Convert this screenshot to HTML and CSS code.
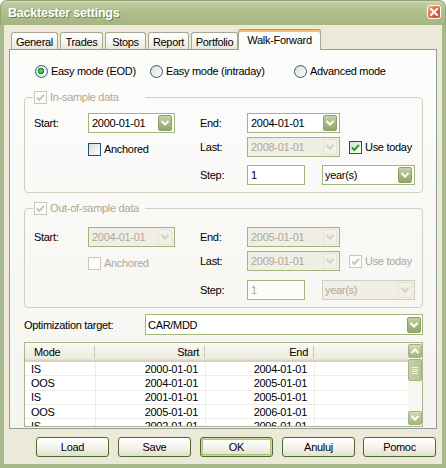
FILE: index.html
```html
<!DOCTYPE html>
<html lang="en">
<head>
<meta charset="utf-8">
<title>Backtester settings</title>
<link rel="stylesheet" href="styles.css">
</head>
<body>
<div class="window">
  <div class="titlebar">
    <span class="title">Backtester settings</span>
    <span class="close-btn"><svg width="12" height="12" viewBox="0 0 12 12"><path d="M3 3 L9 9 M9 3 L3 9" stroke="#fff" stroke-width="2" stroke-linecap="square"/></svg></span>
  </div>
  <div class="client">
    <div class="tabs">
      <div class="tab t-general">General</div>
      <div class="tab t-trades">Trades</div>
      <div class="tab t-stops">Stops</div>
      <div class="tab t-report">Report</div>
      <div class="tab t-portfolio">Portfolio</div>
      <div class="tab tab-active">Walk-Forward</div>
    </div>
    <div class="panel">
      <div class="modes">
        <div class="radio-item ri-1"><span class="radio checked"></span><span>Easy mode (EOD)</span></div>
        <div class="radio-item ri-2"><span class="radio"></span><span>Easy mode (intraday)</span></div>
        <div class="radio-item"><span class="radio"></span><span>Advanced mode</span></div>
      </div>

      <fieldset class="group group-is">
        <legend class="legend"><span class="check disabled"><svg width="11" height="11" viewBox="0 0 11 11"><path d="M2 5.5 L4.3 8 L9 2.8" fill="none" stroke="#c9c7ba" stroke-width="2"/></svg></span><span>In-sample data</span></legend>
        <div class="grow">
          <span class="flabel">Start:</span>
          <div class="combo w-start"><span>2000-01-01</span><span class="combo-btn"><svg width="12" height="14" viewBox="0 0 12 14"><path d="M2.5 5 L6 8.5 L9.5 5" fill="none" stroke="#fff" stroke-width="2"/></svg></span></div>
          <span class="flabel flabel-2">End:</span>
          <div class="combo w-end"><span>2004-01-01</span><span class="combo-btn"><svg width="12" height="14" viewBox="0 0 12 14"><path d="M2.5 5 L6 8.5 L9.5 5" fill="none" stroke="#fff" stroke-width="2"/></svg></span></div>
        </div>
        <div class="grow grow-2">
          <span class="flabel"></span>
          <div class="check-item w-start anchored"><span class="check"></span><span>Anchored</span></div>
          <span class="flabel flabel-2">Last:</span>
          <div class="combo combo-dis w-end"><span>2008-01-01</span><span class="combo-btn btn-dis"><svg width="12" height="14" viewBox="0 0 12 14"><path d="M2.5 5 L6 8.5 L9.5 5" fill="none" stroke="#d3d1c4" stroke-width="2"/></svg></span></div>
          <div class="check-item usetoday"><span class="check"><svg width="11" height="11" viewBox="0 0 11 11"><path d="M2 5.5 L4.3 8 L9 2.8" fill="none" stroke="#21a121" stroke-width="2"/></svg></span><span>Use today</span></div>
        </div>
        <div class="grow grow-3">
          <span class="flabel"></span>
          <span class="w-start"></span>
          <span class="flabel flabel-2">Step:</span>
          <div class="tinput">1</div>
          <div class="combo combo-year"><span>year(s)</span><span class="combo-btn"><svg width="12" height="14" viewBox="0 0 12 14"><path d="M2.5 5 L6 8.5 L9.5 5" fill="none" stroke="#fff" stroke-width="2"/></svg></span></div>
        </div>
      </fieldset>

      <fieldset class="group group-oos">
        <legend class="legend"><span class="check disabled"><svg width="11" height="11" viewBox="0 0 11 11"><path d="M2 5.5 L4.3 8 L9 2.8" fill="none" stroke="#c9c7ba" stroke-width="2"/></svg></span><span>Out-of-sample data</span></legend>
        <div class="grow dis">
          <span class="flabel en">Start:</span>
          <div class="combo combo-dis w-start"><span>2004-01-01</span><span class="combo-btn btn-dis"><svg width="12" height="14" viewBox="0 0 12 14"><path d="M2.5 5 L6 8.5 L9.5 5" fill="none" stroke="#d3d1c4" stroke-width="2"/></svg></span></div>
          <span class="flabel flabel-2 en">End:</span>
          <div class="combo combo-dis w-end"><span>2005-01-01</span><span class="combo-btn btn-dis"><svg width="12" height="14" viewBox="0 0 12 14"><path d="M2.5 5 L6 8.5 L9.5 5" fill="none" stroke="#d3d1c4" stroke-width="2"/></svg></span></div>
        </div>
        <div class="grow grow-2 dis">
          <span class="flabel"></span>
          <div class="check-item w-start anchored"><span class="check disabled"></span><span>Anchored</span></div>
          <span class="flabel flabel-2 en">Last:</span>
          <div class="combo combo-dis w-end"><span>2009-01-01</span><span class="combo-btn btn-dis"><svg width="12" height="14" viewBox="0 0 12 14"><path d="M2.5 5 L6 8.5 L9.5 5" fill="none" stroke="#d3d1c4" stroke-width="2"/></svg></span></div>
          <div class="check-item usetoday"><span class="check disabled"><svg width="11" height="11" viewBox="0 0 11 11"><path d="M2 5.5 L4.3 8 L9 2.8" fill="none" stroke="#c9c7ba" stroke-width="2"/></svg></span><span>Use today</span></div>
        </div>
        <div class="grow grow-3b dis">
          <span class="flabel"></span>
          <span class="w-start"></span>
          <span class="flabel flabel-2 en">Step:</span>
          <div class="tinput tinput-dis">1</div>
          <div class="combo combo-year combo-dis2"><span>year(s)</span><span class="combo-btn btn-dis"><svg width="12" height="14" viewBox="0 0 12 14"><path d="M2.5 5 L6 8.5 L9.5 5" fill="none" stroke="#d3d1c4" stroke-width="2"/></svg></span></div>
        </div>
      </fieldset>

      <div class="opt-row">
        <span class="opt-label">Optimization target:</span>
        <div class="combo combo-opt"><span>CAR/MDD</span><span class="combo-btn"><svg width="12" height="14" viewBox="0 0 12 14"><path d="M2.5 5 L6 8.5 L9.5 5" fill="none" stroke="#fff" stroke-width="2"/></svg></span></div>
      </div>

      <div class="listview">
        <div class="lv-main">
          <div class="lv-head">
            <div class="hc hc-mode">Mode</div>
            <div class="hc hc-num">Start</div>
            <div class="hc hc-num">End</div>
            <div class="hc hc-rest"></div>
          </div>
          <div class="lv-row"><div class="c">IS</div><div class="c num">2000-01-01</div><div class="c num">2004-01-01</div><div class="c rest"></div></div>
          <div class="lv-row"><div class="c">OOS</div><div class="c num">2004-01-01</div><div class="c num">2005-01-01</div><div class="c rest"></div></div>
          <div class="lv-row"><div class="c">IS</div><div class="c num">2001-01-01</div><div class="c num">2005-01-01</div><div class="c rest"></div></div>
          <div class="lv-row"><div class="c">OOS</div><div class="c num">2005-01-01</div><div class="c num">2006-01-01</div><div class="c rest"></div></div>
          <div class="lv-row"><div class="c">IS</div><div class="c num">2002-01-01</div><div class="c num">2006-01-01</div><div class="c rest"></div></div>
        </div>
        <div class="lv-scroll">
          <div class="sb-btn"><svg width="10" height="8" viewBox="0 0 10 8"><path d="M1.5 6 L5 2.5 L8.5 6" fill="none" stroke="#fff" stroke-width="2"/></svg></div>
          <div class="sb-thumb"><span></span><span></span><span></span><span></span></div>
          <div class="sb-track"></div>
          <div class="sb-btn"><svg width="10" height="8" viewBox="0 0 10 8"><path d="M1.5 2 L5 5.5 L8.5 2" fill="none" stroke="#fff" stroke-width="2"/></svg></div>
        </div>
      </div>
    </div>

    <div class="buttons">
      <div class="btn">Load</div>
      <div class="btn">Save</div>
      <div class="btn btn-default">OK</div>
      <div class="btn">Anuluj</div>
      <div class="btn btn-last">Pomoc</div>
    </div>
  </div>
</div>
</body>
</html>
```

FILE: styles.css
```css
* { box-sizing: border-box; }
html, body { margin: 0; padding: 0; }
body {
  width: 446px;
  height: 468px;
  overflow: hidden;
  background: #fff;
  font-family: "Liberation Sans", Arial, sans-serif;
  font-size: 11px;
  letter-spacing: -0.3px;
  color: #000;
}
.window {
  width: 446px;
  height: 468px;
  display: flex;
  flex-direction: column;
}
.titlebar {
  flex: none;
  height: 25px;
  display: flex;
  align-items: center;
  justify-content: space-between;
  padding: 0 4px 1px 7px;
  border-radius: 7px 7px 0 0;
  background: linear-gradient(#d3ddb8 0%, #bccaa0 12%, #b0bf8c 45%, #a9b986 80%, #a6b683 100%);
  border: 1px solid #94a474;
  border-bottom: none;
}
.title {
  color: #fff;
  font-weight: bold;
  font-size: 12.5px;
  letter-spacing: -0.2px;
  text-shadow: 1px 1px 0 #6f8050;
}
.close-btn {
  width: 14px;
  height: 14px;
  border: 1px solid #fff;
  border-radius: 3px;
  background: linear-gradient(135deg, #f3ab8e 0%, #e46a3f 45%, #c9461f 100%);
  display: flex;
  align-items: center;
  justify-content: center;
  margin-top: -1px;
}
.client {
  flex: 1;
  display: flex;
  flex-direction: column;
  background: #ece9d8;
  border-style: solid;
  border-color: #a8b88b;
  border-width: 0 4px 4px 4px;
}

/* tabs */
.tabs {
  display: flex;
  align-items: flex-end;
  height: 21px;
  margin: 4px 5px -1px 7px;
  position: relative;
  z-index: 1;
}
.tab {
  height: 17px;
  margin-bottom: 1px;
  margin-right: 2px;
  border: 1px solid #a5a693;
  border-bottom: none;
  border-radius: 3px 3px 0 0;
  background: linear-gradient(#ffffff, #f4f3ec 60%, #e8e6da);
  display: flex;
  align-items: center;
  justify-content: center;
  padding-top: 1px;
}
.t-general { width: 47px; }
.t-trades { width: 43px; }
.t-stops { width: 41px; }
.t-report { width: 41px; }
.t-portfolio { width: 47px; }
.tab-active {
  width: 83px;
  height: 21px;
  margin: 0 0 0 -2px;
  background: #fcfcfb;
  border-top: 1px solid #e08b35;
  box-shadow: inset 0 2px 0 #f7bd62;
  padding-top: 0;
}

/* panel */
.panel {
  height: 380px;
  margin: 0 5px;
  border: 1px solid #919b9c;
  background: linear-gradient(#fcfcfb, #f5f4ef);
  display: flex;
  flex-direction: column;
}
.modes {
  display: flex;
  align-items: center;
  height: 16px;
  margin-top: 13px;
  padding-left: 25px;
}
.radio-item { display: flex; align-items: center; gap: 3px; }
.ri-1 { width: 115px; }
.ri-2 { width: 144px; }
.radio {
  width: 13px;
  height: 13px;
  flex: none;
  border-radius: 50%;
  border: 1px solid #2c5a84;
  background: linear-gradient(135deg, #dcdcd5, #ffffff);
}
.radio.checked {
  background: radial-gradient(circle at 45% 45%, #9be08f 0, #3aab34 1.8px, #21912a 3px, transparent 3.5px), linear-gradient(135deg, #dcdcd5, #ffffff);
}

/* groups */
.group {
  margin: 11px 13px 0 14px;
  padding: 9px 0 7px 9px;
  border: 1px solid #d0d0bf;
  border-radius: 4px;
  min-width: 0;
}
.group-oos {
  margin-top: 8px;
  padding-top: 12px;
}
.legend {
  width: 112px;
  height: 14px;
  margin-left: -1px;
  padding: 0 0 0 1px;
  display: flex;
  align-items: center;
  gap: 3px;
  color: #aca899;
}
.check {
  width: 13px;
  height: 13px;
  flex: none;
  border: 1px solid #1c5180;
  background: linear-gradient(135deg, #dcdcd5, #ffffff);
  display: flex;
  align-items: center;
  justify-content: center;
}
.check.disabled {
  border-color: #cac8bb;
  background: #fdfdfb;
}
.grow {
  display: flex;
  align-items: center;
  height: 20px;
}
.grow-2 { margin-top: 4px; }
.grow-3 { margin-top: 8px; }
.grow-3b { margin-top: 9px; }
.flabel { width: 54px; flex: none; }
.flabel-2 { width: 47px; margin-left: 25px; }
.w-start { width: 87px; flex: none; }
.w-end { width: 93px; flex: none; }
.dis { color: #aca899; }
.dis .en { color: #000; }
.check-item { display: flex; align-items: center; gap: 3px; }
.anchored { padding-top: 4px; }
.usetoday { margin-left: 9px; }

.combo {
  height: 20px;
  border: 1px solid #a3b57d;
  background: #fff;
  display: flex;
  align-items: center;
  justify-content: space-between;
  padding: 0 2px 0 3px;
}
.combo-btn {
  width: 14px;
  height: 16px;
  flex: none;
  border: 1px solid #8fa16b;
  border-radius: 2px;
  background: linear-gradient(#c4d1a6, #a6b67f 55%, #94a76d);
  display: flex;
  align-items: center;
  justify-content: center;
}
.combo-dis {
  background: #f1efe5;
  color: #aca899;
}
.btn-dis {
  border-color: #e6e4d8;
  background: #f2f0e7;
}
.tinput {
  width: 58px;
  height: 20px;
  flex: none;
  border: 1px solid #a3b57d;
  background: #fff;
  padding-left: 3px;
  display: flex;
  align-items: center;
}
.tinput-dis { color: #aca899; background: #fbfbf8; }
.combo-year {
  width: 93px;
  flex: none;
  margin-left: 17px;
  padding-left: 2px;
}
.combo-dis2 {
  border-color: #cfd0c2;
  background: #f1efe5;
  color: #aca899;
}

/* optimization target */
.opt-row {
  display: flex;
  align-items: center;
  height: 21px;
  margin: 6px 13px 0 14px;
}
.opt-label { width: 121px; flex: none; }
.combo-opt {
  flex: 1;
  height: 21px;
  padding: 0 1px 0 2px;
}

/* list view */
.listview {
  margin: 7px 13px 0 14px;
  height: 85px;
  border: 1px solid #a9b690;
  background: #fff;
  display: flex;
  overflow: hidden;
}
.lv-main { flex: 1; overflow: hidden; }
.lv-head {
  display: grid;
  grid-template-columns: 71px 110px 109px 1fr;
  height: 19px;
  background: linear-gradient(#faf9f4, #ebeadb);
  border-bottom: 2px solid #d6d2c2;
  box-shadow: inset 0 -1px 0 #e3e0d0;
}
.hc {
  display: flex;
  align-items: center;
  padding-top: 1px;
  background: linear-gradient(#c7c5b2, #c7c5b2) no-repeat right 1px center / 1px 12px;
}
.hc-mode { padding-left: 9px; }
.hc-num { justify-content: flex-end; padding-right: 7px; }
.hc-rest { background: none; }
.lv-row {
  display: grid;
  grid-template-columns: 71px 110px 109px 1fr;
  height: 14.3px;
  border-bottom: 1px solid #efede3;
}
.c {
  display: flex;
  align-items: center;
  padding-left: 6px;
  border-right: 1px solid #efede3;
  white-space: nowrap;
}
.c.num { justify-content: flex-end; padding-right: 7px; }
.c.rest { border-right: none; }

.lv-scroll {
  width: 14px;
  flex: none;
  display: flex;
  flex-direction: column;
  padding: 1px 0;
  background: #f8f7f1;
}
.sb-btn {
  height: 14px;
  flex: none;
  border: 1px solid #a3b381;
  border-radius: 2px;
  background: linear-gradient(#d4dfb9, #b2c18e 60%, #a4b57f);
  display: flex;
  align-items: center;
  justify-content: center;
}
.sb-thumb {
  height: 22px;
  flex: none;
  margin-top: 1px;
  border: 1px solid #a3b381;
  border-radius: 2px;
  background: linear-gradient(90deg, #c6d2a7, #b7c595);
  display: flex;
  flex-direction: column;
  align-items: center;
  justify-content: center;
  gap: 1px;
}
.sb-thumb span {
  width: 6px;
  height: 1px;
  background: #eef2e2;
}
.sb-track { flex: 1; }

/* buttons */
.buttons {
  display: flex;
  justify-content: flex-end;
  gap: 9px;
  margin-top: 8px;
  padding-right: 6px;
}
.btn {
  width: 73px;
  height: 20px;
  border: 1px solid #4a6a2e;
  border-radius: 3px;
  background: linear-gradient(#ffffff, #f4f2e9 55%, #e2dfcd);
  display: flex;
  align-items: center;
  justify-content: center;
}
.btn-default {
  box-shadow: inset 0 0 0 1px #c8d8a2, inset 0 0 0 2px #afc37f;
}
.btn-last { margin-left: -1px; }
```
